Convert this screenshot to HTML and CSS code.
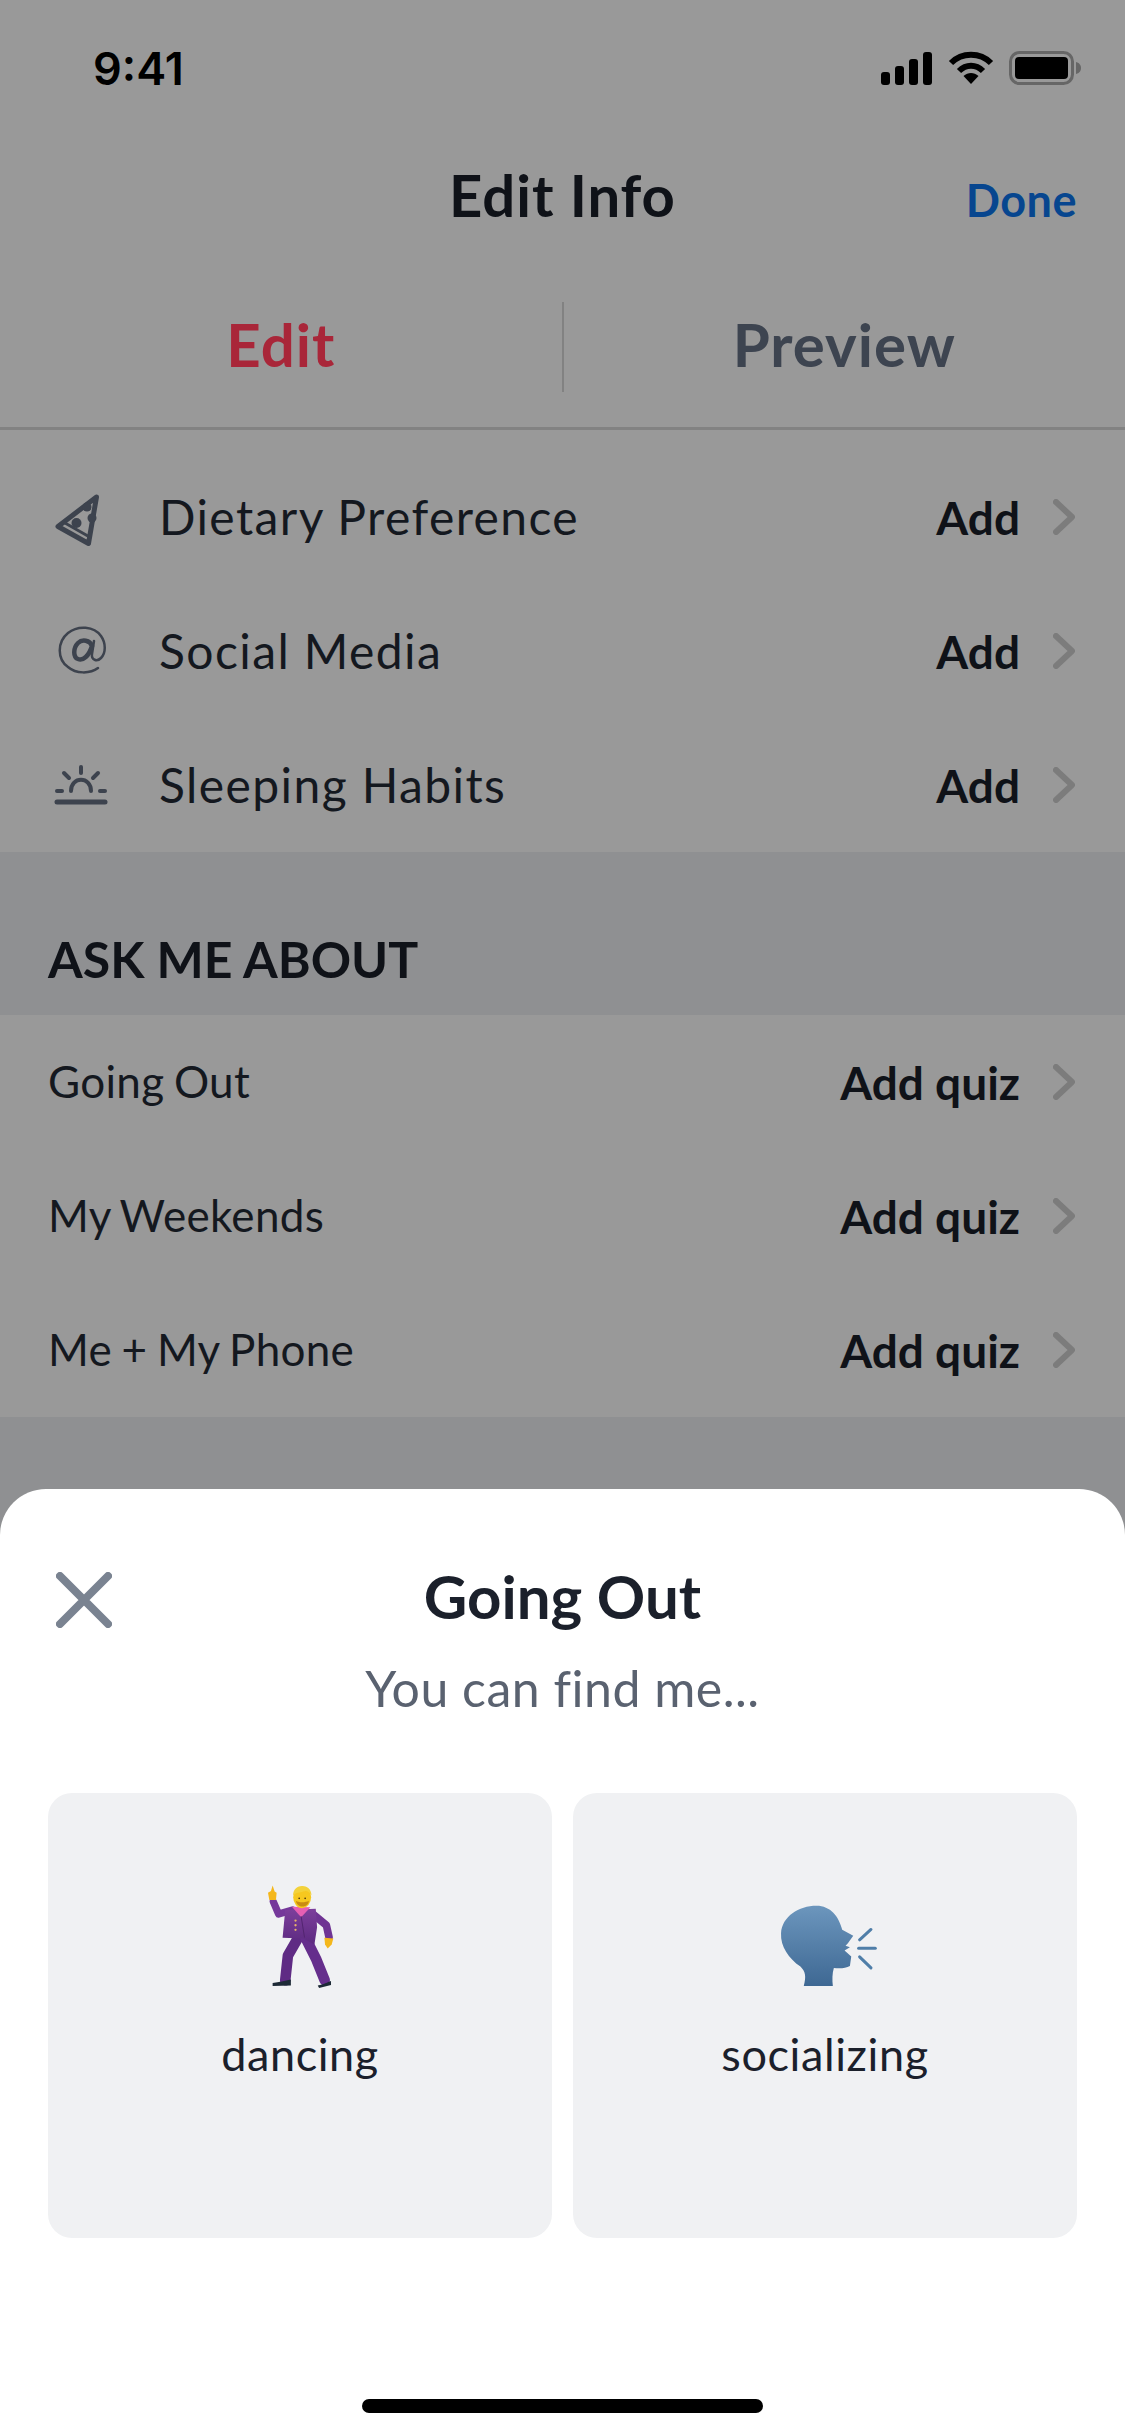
FILE: index.html
```html
<!DOCTYPE html>
<html lang="en">
<head>
    <meta charset="UTF-8">
    <meta name="viewport" content="width=device-width, initial-scale=1.0">
    <title>Edit Info</title>
    <link rel="stylesheet" href="styles.css">
</head>
<body>
    <div class="page">
        <!-- status bar -->
        <div class="status-bar">
            <span class="clock">9:41</span>
            <div class="status-icons">
                <svg class="signal" width="52" height="34" viewBox="0 0 52 34">
                    <rect x="0" y="21" width="9" height="13" rx="3"/>
                    <rect x="14" y="15" width="9" height="19" rx="3"/>
                    <rect x="28" y="8" width="9" height="26" rx="3"/>
                    <rect x="42" y="1" width="9" height="33" rx="3"/>
                </svg>
                <svg class="wifi" width="46" height="34" viewBox="0 0 46 34">
                    <path d="M3 12 C14 1 32 1 43 12" fill="none" stroke="#000" stroke-width="6"/>
                    <path d="M11 20 C18 13 28 13 35 20" fill="none" stroke="#000" stroke-width="6"/>
                    <path d="M23 33 L15.5 25 C20 21 26 21 30.5 25 Z"/>
                </svg>
                <svg class="battery" width="73" height="34" viewBox="0 0 73 34">
                    <rect x="1.5" y="1.5" width="62" height="31" rx="9" fill="none" stroke="#666" stroke-width="3"/>
                    <rect x="6" y="6" width="53" height="22" rx="4"/>
                    <path d="M67 11 C71 12 72 15 72 17 C72 19 71 22 67 23 Z" fill="#666"/>
                </svg>
            </div>
        </div>

        <!-- header -->
        <div class="nav">
            <span></span>
            <h1 class="nav-title">Edit Info</h1>
            <a class="nav-done">Done</a>
        </div>

        <div class="tabs">
            <div class="tab tab-active">Edit</div>
            <div class="tab">Preview</div>
        </div>

        <!-- basics -->
        <div class="list list-first">
            <div class="row">
                <svg class="row-icon" width="66" height="66" viewBox="0 0 66 66">
                    <path d="M48.5 13 L10 42.5 L40.5 59.5 Z" fill="none" stroke="#3d434e" stroke-width="5" stroke-linejoin="round"/>
                    <path d="M17 39 L39 51.5" stroke="#3d434e" stroke-width="3" stroke-linecap="round"/>
                    <circle cx="28.5" cy="39" r="5" fill="#3d434e"/>
                    <circle cx="39" cy="23" r="4.5" fill="#3d434e"/>
                    <circle cx="44" cy="34" r="4.5" fill="#3d434e"/>
                </svg>
                <span class="row-label">Dietary Preference</span>
                <span class="row-action">Add</span>
                <svg class="chevron" width="22" height="36" viewBox="0 0 22 36"><path d="M3 3 L19 18 L3 33"/></svg>
            </div>
            <div class="row">
                <svg class="row-icon" width="66" height="66" viewBox="0 0 66 66">
                    <path d="M50 50 C42 56 28 56 20 49 C9 41 9 24 20 15 C30 7 46 8 53 18 C58 25 58 35 53 40 C49 44 43 42 44 36 L46 23" fill="none" stroke="#3d434e" stroke-width="2.5" stroke-linecap="round"/>
                    <path d="M44 28 C42 22 34 21 30 25 C25 30 25 39 30 41 C35 43 41 38 44 28 Z" fill="none" stroke="#3d434e" stroke-width="4.5"/>
                </svg>
                <span class="row-label">Social Media</span>
                <span class="row-action">Add</span>
                <svg class="chevron" width="22" height="36" viewBox="0 0 22 36"><path d="M3 3 L19 18 L3 33"/></svg>
            </div>
            <div class="row">
                <svg class="row-icon" width="66" height="66" viewBox="0 0 66 66" fill="none" stroke="#3d434e" stroke-width="4" stroke-linecap="round">
                    <path d="M9 50 L57 50" stroke-width="5"/>
                    <path d="M23 39 C23 24 43 24 43 39"/>
                    <path d="M33 15 L33 21"/>
                    <path d="M16 21 L21 26"/>
                    <path d="M50 21 L45 26"/>
                    <path d="M9 39 L14 39"/>
                    <path d="M52 39 L57 39"/>
                </svg>
                <span class="row-label">Sleeping Habits</span>
                <span class="row-action">Add</span>
                <svg class="chevron" width="22" height="36" viewBox="0 0 22 36"><path d="M3 3 L19 18 L3 33"/></svg>
            </div>
        </div>

        <div class="section-title">ASK ME ABOUT</div>

        <div class="list">
            <div class="row">
                <span class="row-label row-label-small">Going Out</span>
                <span class="row-action">Add quiz</span>
                <svg class="chevron" width="22" height="36" viewBox="0 0 22 36"><path d="M3 3 L19 18 L3 33"/></svg>
            </div>
            <div class="row">
                <span class="row-label row-label-small">My Weekends</span>
                <span class="row-action">Add quiz</span>
                <svg class="chevron" width="22" height="36" viewBox="0 0 22 36"><path d="M3 3 L19 18 L3 33"/></svg>
            </div>
            <div class="row">
                <span class="row-label row-label-small">Me + My Phone</span>
                <span class="row-action">Add quiz</span>
                <svg class="chevron" width="22" height="36" viewBox="0 0 22 36"><path d="M3 3 L19 18 L3 33"/></svg>
            </div>
        </div>

        <div class="section-rest"></div>
    </div>

    <!-- quiz sheet -->
    <div class="sheet">
        <div class="sheet-head">
            <svg class="close" width="56" height="56" viewBox="0 0 56 56"><path d="M4 4 L52 52 M52 4 L4 52"/></svg>
            <h2 class="sheet-title">Going Out</h2>
        </div>
        <p class="sheet-sub">You can find me...</p>

        <div class="cards">
            <div class="card">
                <svg class="emoji" width="68" height="107" viewBox="110 100 205 320" fill="none" stroke-linecap="round" stroke-linejoin="round">
                    <defs>
                        <linearGradient id="suit" x1="0" y1="0" x2="0" y2="1">
                            <stop offset="0" stop-color="#7d3f9c"/>
                            <stop offset="1" stop-color="#5c2a80"/>
                        </linearGradient>
                    </defs>
                    <!-- legs -->
                    <path d="M208 262 L176 318 L168 392" stroke="#5f2b84" stroke-width="32"/>
                    <path d="M228 262 L262 330 L287 392" stroke="#652e8c" stroke-width="32"/>
                    <!-- shoes -->
                    <path d="M130 400 C150 398 165 394 185 390 L185 408 L130 409 Z" fill="#1d2a36"/>
                    <path d="M266 408 C285 404 295 398 306 394 L306 406 L270 415 Z" fill="#1d2a36"/>
                    <!-- arms -->
                    <path d="M190 180 L148 192 L132 155" stroke="#75389a" stroke-width="22"/>
                    <path d="M252 193 L292 226 L300 262" stroke="#6f3493" stroke-width="23"/>
                    <!-- jacket -->
                    <path d="M168 180 L260 176 L264 232 L256 284 L222 266 L160 264 Z" fill="url(#suit)"/>
                    <path d="M188 170 L244 172 L216 202 Z" fill="#e65fb3"/>
                    <path d="M216 200 L226 262" stroke="#52246f" stroke-width="3"/>
                    <circle cx="199" cy="212" r="3.5" fill="#e7b26a"/>
                    <circle cx="199" cy="226" r="3.5" fill="#e7b26a"/>
                    <circle cx="199" cy="240" r="3.5" fill="#e7b26a"/>
                    <!-- hands -->
                    <path d="M130 106 L136 124 L142 128 L140 150 L120 150 L116 128 L125 123 Z" fill="#f4b71c"/>
                    <path d="M286 264 L313 266 L308 284 L296 296 L288 284 Z" fill="#f4b71c"/>
                    <!-- head -->
                    <ellipse cx="219" cy="142" rx="27" ry="33" fill="#f6c81f"/>
                    <path d="M200 152 C208 158 230 158 239 152 C239 174 203 176 200 152 Z" fill="#c98c12"/>
                    <path d="M192 136 C190 98 248 98 247 136 C240 124 232 120 222 124 C212 128 200 126 192 136 Z" fill="#f3d23a"/>
                    <circle cx="210" cy="145" r="2.5" fill="#3a2a10"/>
                    <circle cx="228" cy="145" r="2.5" fill="#3a2a10"/>
                </svg>
                <span class="card-label">dancing</span>
            </div>
            <div class="card">
                <svg class="emoji" width="107" height="107" viewBox="65 70 320 320" fill="none">
                    <defs>
                        <linearGradient id="head" x1="0" y1="0" x2="0" y2="1">
                            <stop offset="0" stop-color="#6c96bd"/>
                            <stop offset="1" stop-color="#3e6893"/>
                        </linearGradient>
                    </defs>
                    <path d="M160 378 C168 350 165 335 150 320 C115 295 90 260 92 220 C95 170 145 138 198 138 C240 138 265 170 275 210 L308 228 L292 250 L285 258 L298 262 L282 272 L302 290 L298 318 C285 326 265 325 250 324 C245 340 245 360 247 378 Z" fill="url(#head)"/>
                    <g stroke="#4f7ea8" stroke-width="9" stroke-linecap="round">
                        <path d="M327 240 L361 209"/>
                        <path d="M324 265 L374 265"/>
                        <path d="M327 291 L361 324"/>
                    </g>
                </svg>
                <span class="card-label">socializing</span>
            </div>
        </div>

        <div class="home-bar"></div>
    </div>
</body>
</html>
```

FILE: styles.css
```css
/* base */
html, body {
    margin: 0;
    width: 1125px;
    height: 2436px;
    overflow: hidden;
}

body {
    position: relative;
    background: #999999;
    font-family: 'Lato', 'Liberation Sans', sans-serif;
    color: #0f1218;
}

h1, h2, p {
    margin: 0;
}

.page {
    display: flex;
    flex-direction: column;
    height: 2436px;
}

/* status bar */
.status-bar {
    height: 136px;
    display: flex;
    align-items: center;
    justify-content: space-between;
    padding: 0 43px 0 93px;
    box-sizing: border-box;
}

.clock {
    font-family: 'Inter', sans-serif;
    font-size: 45px;
    font-weight: 600;
    color: #000;
}

.status-icons {
    display: flex;
    align-items: center;
    gap: 15px;
}

/* nav */
.nav {
    height: 122px;
    display: grid;
    grid-template-columns: 1fr auto 1fr;
    align-items: center;
    padding: 0 48px;
}

.nav-title {
    font-size: 58px;
    font-weight: 700;
    letter-spacing: 1px;
    color: #0f1218;
    padding-bottom: 5px;
}

.nav-done {
    justify-self: end;
    font-size: 45px;
    font-weight: 700;
    letter-spacing: 0.5px;
    color: #07468f;
    padding-top: 6px;
}

/* tabs */
.tabs {
    display: flex;
    padding: 44px 0 35px;
    border-bottom: 3px solid #828282;
}

.tab {
    flex: 1;
    height: 90px;
    box-sizing: border-box;
    padding-bottom: 6px;
    display: flex;
    align-items: center;
    justify-content: center;
    font-size: 60px;
    font-weight: 700;
    letter-spacing: 1px;
    color: #3d4450;
}

.tab-active {
    color: #a92639;
    border-right: 2px solid #828282;
}

/* rows */
.list-first {
    padding-top: 20px;
}

.row {
    height: 134px;
    display: flex;
    align-items: center;
    padding: 0 50px 0 48px;
}

.row-icon {
    margin-right: 45px;
}

.row-label {
    flex: 1;
    font-size: 48px;
    letter-spacing: 1.4px;
    color: #14181f;
    padding-bottom: 2px;
}

.row-label-small {
    font-size: 44px;
    letter-spacing: 0.3px;
    word-spacing: -2px;
}

.row-action {
    font-size: 46px;
    font-weight: 700;
    color: #0f1218;
    margin-right: 33px;
}

.chevron {
    fill: none;
    stroke: #7c7c7c;
    stroke-width: 6;
    stroke-linecap: round;
    stroke-linejoin: round;
}

/* section */
.section-title {
    height: 163px;
    box-sizing: border-box;
    padding: 77px 48px 0;
    background: #8f9092;
    font-size: 50px;
    font-weight: 700;
    color: #0f1218;
}

.section-rest {
    flex: 1;
    background: #8f9092;
}

/* sheet */
.sheet {
    position: absolute;
    left: 0;
    right: 0;
    bottom: 0;
    height: 947px;
    box-sizing: border-box;
    display: flex;
    flex-direction: column;
    background: #fff;
    border-radius: 46px 46px 0 0;
}

.sheet-head {
    position: relative;
    padding-top: 71px;
    text-align: center;
}

.close {
    position: absolute;
    left: 56px;
    top: 83px;
    fill: none;
    stroke: #7a8391;
    stroke-width: 8;
    stroke-linecap: round;
}

.sheet-title {
    font-size: 60px;
    font-weight: 700;
    line-height: 72px;
    color: #1b202b;
}

.sheet-sub {
    margin-top: 27px;
    text-align: center;
    font-size: 50px;
    line-height: 58px;
    letter-spacing: 0.5px;
    color: #5a6270;
}

.cards {
    display: grid;
    grid-template-columns: 504px 504px;
    gap: 21px;
    padding: 76px 48px 0;
}

.card {
    height: 445px;
    box-sizing: border-box;
    padding-top: 90px;
    display: flex;
    flex-direction: column;
    align-items: center;
    background: #f0f1f3;
    border-radius: 24px;
}

.emoji {
    height: 107px;
    flex: none;
}

.card-label {
    margin-top: 37px;
    font-size: 45px;
    line-height: 54px;
    letter-spacing: 0.6px;
    color: #1b202b;
}

.home-bar {
    width: 401px;
    height: 14px;
    margin: auto auto 23px;
    background: #000;
    border-radius: 7px;
}
```
